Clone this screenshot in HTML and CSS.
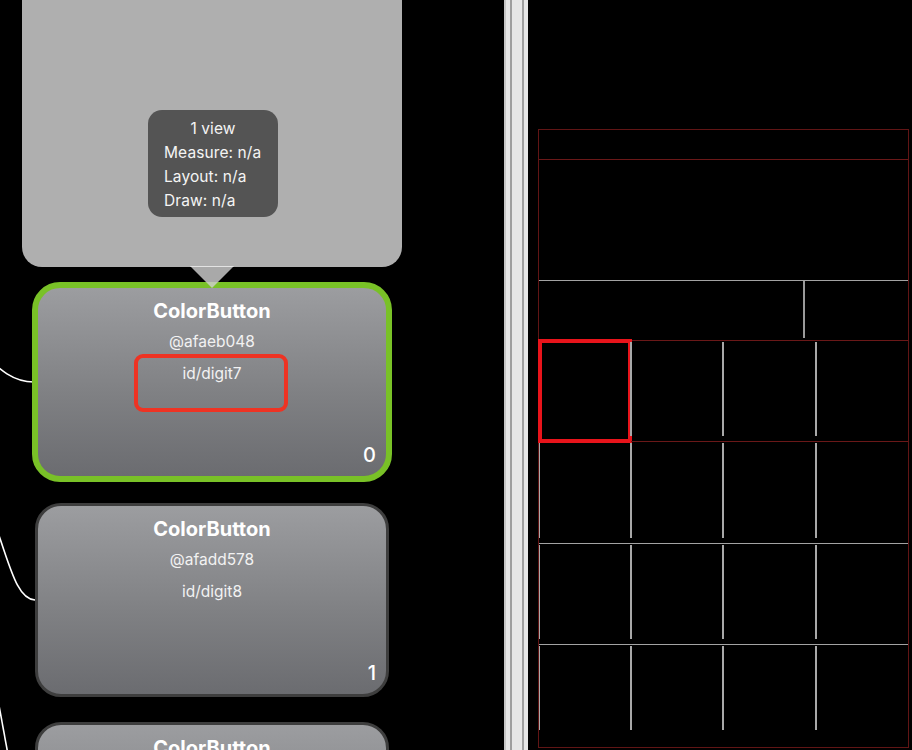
FILE: index.html
```html
<!DOCTYPE html>
<html>
<head>
<meta charset="utf-8">
<link rel="stylesheet" href="styles.css">
</head>
<body>
<div class="app">
  <section class="graph">
    <svg class="edges" width="60" height="750" viewBox="0 0 60 750">
      <path d="M -20 350 C 0 371, 14 382, 34 382" />
      <path d="M -3 530 C 10 566, 17 599, 35 600" />
      <path d="M -2 700 L 9 760" />
    </svg>
    <div class="nodes">
      <div class="parent-node">
        <div class="tooltip">
          <div class="tip-title">1 view</div>
          <div>Measure: n/a</div>
          <div>Layout: n/a</div>
          <div>Draw: n/a</div>
        </div>
        <div class="pointer"></div>
      </div>
      <div class="node selected">
        <div class="node-title">ColorButton</div>
        <div class="node-line">@afaeb048</div>
        <div class="node-line">id/digit7</div>
        <div class="id-highlight"></div>
        <div class="node-index">0</div>
      </div>
      <div class="node second">
        <div class="node-title">ColorButton</div>
        <div class="node-line">@afadd578</div>
        <div class="node-line">id/digit8</div>
        <div class="node-index">1</div>
      </div>
      <div class="node third">
        <div class="node-title">ColorButton</div>
      </div>
    </div>
  </section>
  <div class="splitter"></div>
  <section class="preview">
    <div class="wireframe">
      <div class="wf-status"></div>
      <div class="wf-display"></div>
      <div class="wf-func">
        <div class="wf-func-main"></div>
        <div class="wf-func-side"></div>
      </div>
      <div class="wf-keys">
        <div class="key first-key row-a"><div class="key-highlight"></div></div>
        <div class="key row-a"></div>
        <div class="key row-a"></div>
        <div class="key row-a"></div>
        <div class="key row-b"></div>
        <div class="key row-b"></div>
        <div class="key row-b"></div>
        <div class="key row-b"></div>
        <div class="key row-c"></div>
        <div class="key row-c"></div>
        <div class="key row-c"></div>
        <div class="key row-c"></div>
        <div class="key row-d"></div>
        <div class="key row-d"></div>
        <div class="key row-d"></div>
        <div class="key row-d"></div>
      </div>
    </div>
  </section>
</div>
</body>
</html>
```
FILE: styles.css
```css
html, body {
  margin: 0;
  padding: 0;
  background: #000;
  overflow: hidden;
}
body {
  width: 912px;
  height: 750px;
  font-family: Inter, "Noto Sans", "Liberation Sans", sans-serif;
  color: #fff;
}
.app {
  display: flex;
  height: 750px;
}
.graph {
  position: relative;
  width: 504px;
  flex: none;
  overflow: hidden;
}
.edges {
  position: absolute;
  left: 0;
  top: 0;
}
.edges path {
  fill: none;
  stroke: #fff;
  stroke-width: 1.6;
}
.nodes {
  width: 380px;
  margin-left: 22px;
  display: flex;
  flex-direction: column;
  align-items: center;
}
.parent-node {
  position: relative;
  width: 380px;
  height: 307px;
  margin-top: -40px;
  background: #afafaf;
  border-radius: 20px;
  flex: none;
}
.tooltip {
  position: absolute;
  left: 126px;
  top: 150px;
  width: 130px;
  height: 107px;
  box-sizing: border-box;
  padding: 7px 0 0 16px;
  background: #545454;
  border-radius: 14px;
  font-size: 15.5px;
  letter-spacing: 0.1px;
  line-height: 24px;
  color: #f4f4f4;
  white-space: nowrap;
}
.tip-title {
  text-align: center;
  padding-right: 16px;
}
.pointer {
  position: absolute;
  left: 168px;
  top: 306px;
  width: 44px;
  height: 22px;
  background: rgba(206, 206, 206, 0.82);
  clip-path: polygon(0 0, 100% 0, 50% 100%);
  z-index: 2;
  border-top: 1px solid rgba(230, 230, 230, 0.9);
  box-sizing: border-box;
}
.node {
  position: relative;
  flex: none;
  width: 348px;
  height: 188px;
  box-sizing: content-box;
  border: 3px solid #3e3e3e;
  border-radius: 26px;
  background: linear-gradient(180deg, #9c9da0 0%, #808184 55%, #6b6c70 100%);
  text-align: center;
}
.node.selected {
  border: 6px solid #79c127;
  border-radius: 28px;
  margin-top: 15px;
}
.node.second {
  margin-top: 21px;
}
.node.third {
  margin-top: 25px;
}
.node-title {
  padding-top: 11px;
  font-size: 20px;
  font-weight: 700;
  line-height: 24px;
  letter-spacing: 0;
}
.node-line {
  font-size: 15.5px;
  line-height: 32px;
  color: #f2f2f2;
}
.node-title + .node-line {
  margin-top: 3px;
}
.id-highlight {
  position: absolute;
  left: 96px;
  top: 66px;
  width: 154px;
  height: 58px;
  box-sizing: border-box;
  border: 4px solid #ee3323;
  border-radius: 9px;
}
.node-index {
  position: absolute;
  right: 10px;
  bottom: 9px;
  font-size: 20px;
  line-height: 24px;
  font-weight: 500;
}
.splitter {
  flex: none;
  width: 24px;
  height: 750px;
  background: linear-gradient(90deg,
    #c6c6c6 0, #c6c6c6 2px,
    #e6e6e6 2px, #e6e6e6 6px,
    #9e9e9e 6px, #9e9e9e 8px,
    #e6e6e6 8px, #e6e6e6 18px,
    #9e9e9e 18px, #9e9e9e 20px,
    #e6e6e6 20px, #e6e6e6 24px);
}
.preview {
  flex: 1;
  padding: 129px 0 0 10px;
}
.wireframe {
  width: 369px;
  height: 617px;
  border: 1px solid #611515;
  display: flex;
  flex-direction: column;
}
.wf-status {
  height: 29px;
  flex: none;
  border-bottom: 1px solid #6a1818;
}
.wf-display {
  height: 120px;
  flex: none;
  border-bottom: 1px solid #a3a3a3;
}
.wf-func {
  height: 59px;
  flex: none;
  display: flex;
  border-bottom: 1px solid #6a1818;
}
.wf-func-main {
  width: 264px;
  border-right: 2px solid #9a9a9a;
  margin-bottom: 2px;
}
.wf-func-side {
  flex: 1;
}
.wf-keys {
  flex: 1;
  display: grid;
  grid-template-columns: 92px 92px 93px 92px;
  grid-template-rows: 101px 102px 101px 1fr;
}
.key {
  position: relative;
}
.key::before {
  content: "";
  position: absolute;
  left: -1px;
  top: 1px;
  bottom: 5px;
  width: 2px;
  background: #a8a8a8;
}
.row-a {
  border-bottom: 1px solid #6a1818;
}
.row-b, .row-c {
  border-bottom: 1px solid #a3a3a3;
}
.row-d::before {
  bottom: 17px;
}
.first-key::before {
  display: none;
}
.key:nth-child(4n+1)::before {
  left: 0;
  width: 1px;
}
.key-highlight {
  position: absolute;
  left: -1px;
  top: -2px;
  width: 94px;
  height: 104px;
  box-sizing: border-box;
  border: 4px solid #e8141b;
}
```
